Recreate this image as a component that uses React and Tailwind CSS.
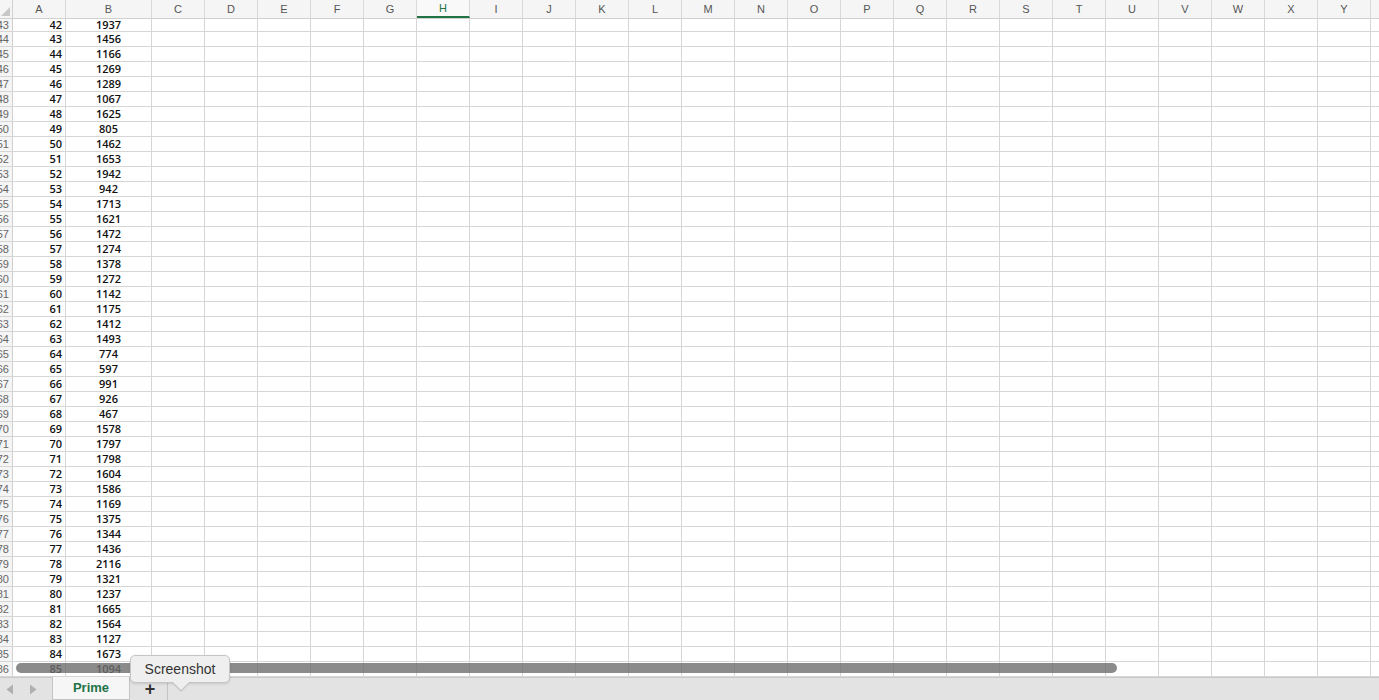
const COLS = ['C','D','E','F','G','H','I','J','K','L','M','N','O','P','Q','R','S','T','U','V','W','X','Y'];

const VALUES = [
  1937, 1456, 1166, 1269, 1289, 1067, 1625, 805, 1462, 1653, 1942, 942, 1713, 1621, 1472,
  1274, 1378, 1272, 1142, 1175, 1412, 1493, 774, 597, 991, 926, 467, 1578, 1797, 1798,
  1604, 1586, 1169, 1375, 1344, 1436, 2116, 1321, 1237, 1665, 1564, 1127, 1673, 1094,
];

const font = { fontFamily: '"Liberation Sans", Arial, sans-serif' };
const cellFont = { fontFamily: '"Open Sans", "Liberation Sans", sans-serif' };

function HeaderRow() {
  return (
    <div className="flex h-[19px] bg-[#f5f5f5] border-b border-[#d0d0d0] text-[11px] text-[#555]">
      <div className="w-[13px] shrink-0 border-r border-[#d0d0d0] relative overflow-hidden">
        <div className="absolute right-[2px] bottom-[2px] w-0 h-0 border-l-[9px] border-l-transparent border-b-[9px] border-b-[#c8c8c8]" />
      </div>
      <div className="w-[53px] shrink-0 border-r border-[#d9d9d9] flex items-center justify-center">A</div>
      <div className="w-[86px] shrink-0 border-r border-[#d9d9d9] flex items-center justify-center">B</div>
      {COLS.map((c) => (
        <div
          key={c}
          className={`w-[53px] shrink-0 border-r border-[#d9d9d9] flex items-center justify-center ${
            c === 'H' ? 'text-[#217346] border-b-2 border-b-[#217346] bg-[#f9f9f9]' : ''
          }`}>
          {c}
        </div>
      ))}
      <div className="flex-1" />
    </div>
  );
}

function DataRow({ row, a, b, first }) {
  return (
    <div className={`flex ${first ? 'h-[13px]' : 'h-[15px]'} border-b border-[#d6d6d6] text-[11px] leading-none`}>
      <div className="w-[13px] shrink-0 border-r border-[#d0d0d0] bg-[#f5f5f5] overflow-hidden flex items-center justify-end pr-[3px] text-[#666]">
        <span className="whitespace-nowrap">{row}</span>
      </div>
      <div
        className="w-[53px] shrink-0 border-r border-[#d6d6d6] flex items-center justify-end pr-[3px] pb-[2px] text-[#111] font-semibold"
        style={cellFont}>
        {a}
      </div>
      <div
        className="w-[86px] shrink-0 border-r border-[#d6d6d6] flex items-center justify-center pb-[2px] text-[#111] font-semibold"
        style={cellFont}>
        {b}
      </div>
      {COLS.map((c) => (
        <div key={c} className="w-[53px] shrink-0 border-r border-[#d6d6d6]" />
      ))}
      <div className="flex-1" />
    </div>
  );
}

function TabBar() {
  return (
    <div className="h-[23px] bg-[#e3e3e3] border-t border-[#c9c9c9] flex items-stretch">
      <div className="w-[52px] flex items-center gap-[15px] pl-[6px]">
        <svg width="8" height="11" viewBox="0 0 8 11">
          <path d="M7 0.5 L0.5 5.5 L7 10.5 Z" fill="#b0b0b0" />
        </svg>
        <svg width="8" height="11" viewBox="0 0 8 11">
          <path d="M1 0.5 L7.5 5.5 L1 10.5 Z" fill="#b0b0b0" />
        </svg>
      </div>
      <div className="w-[78px] bg-[#f6f6f6] border-x border-b border-[#c4c4c4] -mt-px flex items-center justify-center text-[13px] font-bold text-[#217346]">
        Prime
      </div>
      <div className="w-[38px] border-r border-[#c4c4c4] flex items-center justify-center pl-[3px] text-[18px] font-bold text-[#333] leading-none">
        +
      </div>
    </div>
  );
}

export default function App() {
  return (
    <div className="relative w-[1379px] h-[700px] overflow-hidden bg-white select-none" style={font}>
      <HeaderRow />
      {VALUES.map((v, i) => (
        <DataRow key={i} row={43 + i} a={42 + i} b={v} first={i === 0} />
      ))}
      <TabBar />

      {/* horizontal scrollbar thumb */}
      <div className="absolute left-[16px] top-[663px] w-[1101px] h-[10px] rounded-full bg-[rgba(110,110,110,0.8)]" />

      {/* tooltip */}
      <div className="absolute left-[130px] top-[655px] w-[100px] h-[28px] rounded-[5px] bg-[#efefef] border border-[#c6c6c6] shadow-sm flex items-center justify-center text-[14px] text-[#333]">
        Screenshot
        <div className="absolute left-[40px] -bottom-[10px] w-0 h-0 border-x-[10px] border-x-transparent border-t-[10px] border-t-[#c6c6c6]" />
        <div className="absolute left-[41px] -bottom-[8px] w-0 h-0 border-x-[9px] border-x-transparent border-t-[9px] border-t-[#efefef]" />
      </div>
    </div>
  );
}
